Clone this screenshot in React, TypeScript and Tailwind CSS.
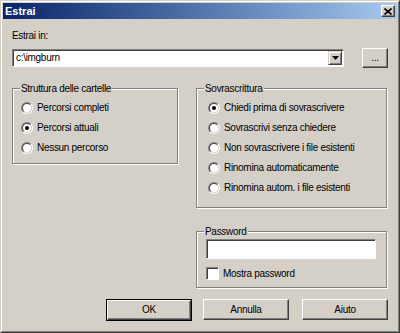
import React from 'react'

const txt = 'text-[10px] tracking-[-0.3px] leading-none'

const Radio = ({ checked }: { checked?: boolean }) => (
  <span className="flex w-[12px] h-[12px] shrink-0 rounded-full border border-t-[#808080] border-l-[#808080] border-r-white border-b-white">
    <span className="flex flex-1 items-center justify-center rounded-full border border-t-[#404040] border-l-[#404040] border-r-[#d4d0c8] border-b-[#d4d0c8] bg-white">
      {checked && <span className="w-[4px] h-[4px] rounded-full bg-black" />}
    </span>
  </span>
)

const Group = ({ label, className, children }: { label: string; className: string; children: React.ReactNode }) => (
  <div className={'relative border border-[#808080] shadow-[1px_1px_0_#fff,inset_1px_1px_0_#fff] ' + className}>
    <span className="absolute top-[-7px] left-[7px] bg-[#d4d0c8] px-[1px] text-[10px] tracking-[-0.3px] leading-[13px]">{label}</span>
    {children}
  </div>
)

const Button = ({ label, def, className }: { label: string; def?: boolean; className?: string }) => (
  <div className={(def ? 'border border-black ' : '') + 'flex ' + (className ?? '')}>
    <button className={'flex-1 flex items-center justify-center border border-t-white border-l-white border-r-[#404040] border-b-[#404040] shadow-[inset_-1px_-1px_0_#808080] bg-[#d4d0c8] ' + txt}>
      {label}
    </button>
  </div>
)

const RadioRow = ({ label, checked }: { label: string; checked?: boolean }) => (
  <div className="flex items-center gap-[4px] h-[20px]">
    <Radio checked={checked} />
    <span className={txt}>{label}</span>
  </div>
)

export default function App() {
  return (
    <div className="w-[400px] h-[333px] bg-[#d4d0c8] text-black font-['Liberation_Sans',sans-serif] border border-t-[#d4d0c8] border-l-[#d4d0c8] border-r-[#404040] border-b-[#404040]">
      <div className="h-full flex flex-col border border-t-white border-l-white border-r-[#808080] border-b-[#808080] p-px">
        {/* title bar */}
        <div className="h-[16px] flex items-center justify-between bg-gradient-to-r from-[#0a246a] to-[#a6caf0] pl-[2px] pr-[2px]">
          <span className="text-white font-bold text-[11px] leading-none">Estrai</span>
          <div className="w-[14px] h-[12px] flex items-center justify-center border border-t-white border-l-white border-r-[#404040] border-b-[#404040] shadow-[inset_-1px_-1px_0_#808080] bg-[#d4d0c8]">
            <svg width="8" height="7" viewBox="0 0 8 7">
              <path d="M0.5 0.5 L7.5 6.5 M7.5 0.5 L0.5 6.5" stroke="black" strokeWidth="1.6" />
            </svg>
          </div>
        </div>

        <div className="flex flex-col px-[9px]">
          <span className="mt-[10px] h-[13px] text-[10px] tracking-[-0.3px] leading-[13px]">Estrai in:</span>

          <div className="mt-[6px] h-[20px] flex items-center justify-between">
            <div className="w-[332px] h-[18px] flex items-center bg-white border border-t-[#808080] border-l-[#808080] border-r-white border-b-white shadow-[inset_1px_1px_0_#404040]">
              <span className={'flex-1 pl-[3px] ' + txt}>c:\imgburn</span>
              <div className="w-[14px] h-[14px] mr-px flex items-center justify-center border border-t-[#d4d0c8] border-l-[#d4d0c8] border-r-[#404040] border-b-[#404040] shadow-[inset_1px_1px_0_#fff,inset_-1px_-1px_0_#808080] bg-[#d4d0c8]">
                <svg width="7" height="4" viewBox="0 0 7 4">
                  <path d="M0 0 H7 L3.5 4 Z" fill="black" />
                </svg>
              </div>
            </div>
            <Button label="..." className="w-[26px] h-[20px]" />
          </div>

          <div className="mt-[20px] flex gap-[18px]">
            <Group label="Struttura delle cartelle" className="w-[166px] h-[76px] pt-[9px] pl-[8px]">
              <RadioRow label="Percorsi completi" />
              <RadioRow label="Percorsi attuali" checked />
              <RadioRow label="Nessun percorso" />
            </Group>

            <div className="flex flex-col">
              <Group label="Sovrascrittura" className="w-[191px] h-[120px] pt-[9px] pl-[11px]">
                <RadioRow label="Chiedi prima di sovrascrivere" checked />
                <RadioRow label="Sovrascrivi senza chiedere" />
                <RadioRow label="Non sovrascrivere i file esistenti" />
                <RadioRow label="Rinomina automaticamente" />
                <RadioRow label="Rinomina autom. i file esistenti" />
              </Group>

              <Group label="Password" className="mt-[23px] w-[191px] h-[57px] pt-[7px] pl-[9px]">
                <div className="w-[170px] h-[20px] bg-white border border-t-[#808080] border-l-[#808080] border-r-white border-b-white shadow-[inset_1px_1px_0_#404040]" />
                <div className="mt-[8px] flex items-center gap-[4px]">
                  <span className="w-[13px] h-[13px] bg-white border border-t-[#808080] border-l-[#808080] border-r-white border-b-white shadow-[inset_1px_1px_0_#404040]" />
                  <span className={txt}>Mostra password</span>
                </div>
              </Group>
            </div>
          </div>

          <div className="mt-[11px] flex justify-end">
            <Button label="OK" def className="w-[86px] h-[22px]" />
            <Button label="Annulla" className="ml-[11px] w-[86px] h-[21px]" />
            <Button label="Aiuto" className="ml-[13px] w-[86px] h-[21px]" />
          </div>
        </div>
      </div>
    </div>
  )
}
